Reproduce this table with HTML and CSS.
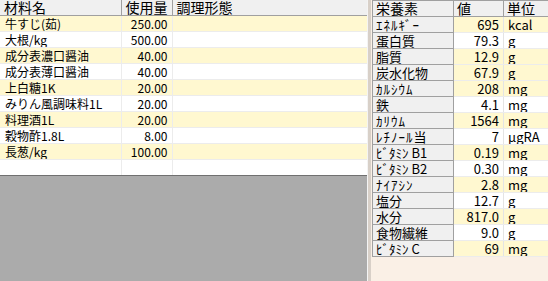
FILE: index.html
```html
<!DOCTYPE html>
<html lang="ja">
<head>
<meta charset="utf-8">
<link rel="stylesheet" href="styles.css">
</head>
<body>
<div class="app">
  <section class="left">
    <table class="grid">
      <colgroup><col class="c-name"><col class="c-amt"><col class="c-cook"></colgroup>
      <thead>
        <tr><th>材料名</th><th>使用量</th><th>調理形態</th></tr>
      </thead>
      <tbody>
        <tr class="y"><td>牛すじ(茹)</td><td class="num">250.00</td><td></td></tr>
        <tr><td>大根/kg</td><td class="num">500.00</td><td></td></tr>
        <tr class="y"><td>成分表濃口醤油</td><td class="num">40.00</td><td></td></tr>
        <tr><td>成分表薄口醤油</td><td class="num">40.00</td><td></td></tr>
        <tr class="y"><td>上白糖1K</td><td class="num">20.00</td><td></td></tr>
        <tr><td>みりん風調味料1L</td><td class="num">20.00</td><td></td></tr>
        <tr class="y"><td>料理酒1L</td><td class="num">20.00</td><td></td></tr>
        <tr><td>穀物酢1.8L</td><td class="num">8.00</td><td></td></tr>
        <tr class="y"><td>長葱/kg</td><td class="num">100.00</td><td></td></tr>
        <tr class="last"><td></td><td></td><td></td></tr>
      </tbody>
    </table>
  </section>
  <div class="splitter"></div>
  <section class="right">
    <table class="nut">
      <colgroup><col class="n-name"><col class="n-val"><col class="n-unit"></colgroup>
      <thead>
        <tr><th>栄養素</th><th>値</th><th>単位</th></tr>
      </thead>
      <tbody>
        <tr class="y"><th class="kana">ｴﾈﾙｷﾞｰ</th><td class="num">695</td><td>kcal</td></tr>
        <tr><th>蛋白質</th><td class="num">79.3</td><td>g</td></tr>
        <tr class="y"><th>脂質</th><td class="num">12.9</td><td>g</td></tr>
        <tr class="y"><th>炭水化物</th><td class="num">67.9</td><td>g</td></tr>
        <tr class="y"><th class="kana">ｶﾙｼｳﾑ</th><td class="num">208</td><td>mg</td></tr>
        <tr><th>鉄</th><td class="num">4.1</td><td>mg</td></tr>
        <tr class="y"><th class="kana">ｶﾘｳﾑ</th><td class="num">1564</td><td>mg</td></tr>
        <tr><th class="kana">ﾚﾁﾉｰﾙ当</th><td class="num">7</td><td>μgRA</td></tr>
        <tr class="y"><th>ﾋﾞﾀﾐﾝ B1</th><td class="num">0.19</td><td>mg</td></tr>
        <tr><th>ﾋﾞﾀﾐﾝ B2</th><td class="num">0.30</td><td>mg</td></tr>
        <tr class="y"><th class="kana">ﾅｲｱｼﾝ</th><td class="num">2.8</td><td>mg</td></tr>
        <tr><th>塩分</th><td class="num">12.7</td><td>g</td></tr>
        <tr class="y"><th>水分</th><td class="num">817.0</td><td>g</td></tr>
        <tr><th>食物繊維</th><td class="num">9.0</td><td>g</td></tr>
        <tr class="y"><th>ﾋﾞﾀﾐﾝ C</th><td class="num">69</td><td>mg</td></tr>
      </tbody>
    </table>
  </section>
</div>
</body>
</html>
```

FILE: styles.css
```css
html, body {
  margin: 0;
  padding: 0;
}
body {
  width: 548px;
  height: 281px;
  overflow: hidden;
  font-family: "Noto Sans CJK JP", "Liberation Sans", sans-serif;
  color: #000;
  background: #faf0e6;
}
.app {
  display: flex;
  width: 548px;
  height: 281px;
}
.left {
  width: 367px;
  flex: none;
  background: #ababab;
  height: 281px;
}
.splitter {
  width: 3px;
  flex: none;
  border-left: 1px solid #f4f4f4;
  background: #d8d0c8;
}
.right {
  flex: 1;
  overflow: hidden;
  padding-left: 1px;
}
table {
  border-collapse: collapse;
  table-layout: fixed;
}
.grid {
  width: 367px;
  background: #fff;
}
.c-name { width: 121px; }
.c-amt { width: 51px; }
.c-cook { width: 195px; }
.grid th {
  height: 15px;
  padding: 0 4px;
  background: #f0f0f0;
  border-right: 1px solid #a0a0a0;
  border-bottom: 1px solid #a0a0a0;
  font-size: 14px;
  font-weight: normal;
  line-height: 15px;
  text-align: left;
  white-space: nowrap;
}
.grid td {
  height: 15px;
  padding: 0 4px 0 5px;
  border-right: 1px solid #ececec;
  border-bottom: 1px solid #ececec;
  font-size: 12px;
  line-height: 15px;
  white-space: nowrap;
  overflow: hidden;
}
.grid tr.y td { background: #fff8d0; }
.grid tr.last td { border-bottom: 1px solid #707070; }
.num { text-align: right; }

.nut {
  width: 200px;
  border-left: 1px solid #808080;
}
.n-name { width: 81px; }
.n-val { width: 50px; }
.n-unit { width: 69px; }
.nut th, .nut td {
  height: 15px;
  font-size: 13px;
  font-weight: normal;
  line-height: 15px;
  white-space: nowrap;
  overflow: hidden;
}
.nut th {
  text-align: left;
  padding: 0 3px;
  background: #f0f0f0;
  border: 1px solid #a0a0a0;
}
.nut thead th {
  font-size: 14px;
}
.nut th.kana {
  letter-spacing: 1px;
}
.nut td {
  background: #fff;
  border-right: 1px solid #e4e4e4;
  border-bottom: 1px solid #ececec;
  padding: 0 4px;
}
.nut tr.y td { background: #fff8d0; }
```
